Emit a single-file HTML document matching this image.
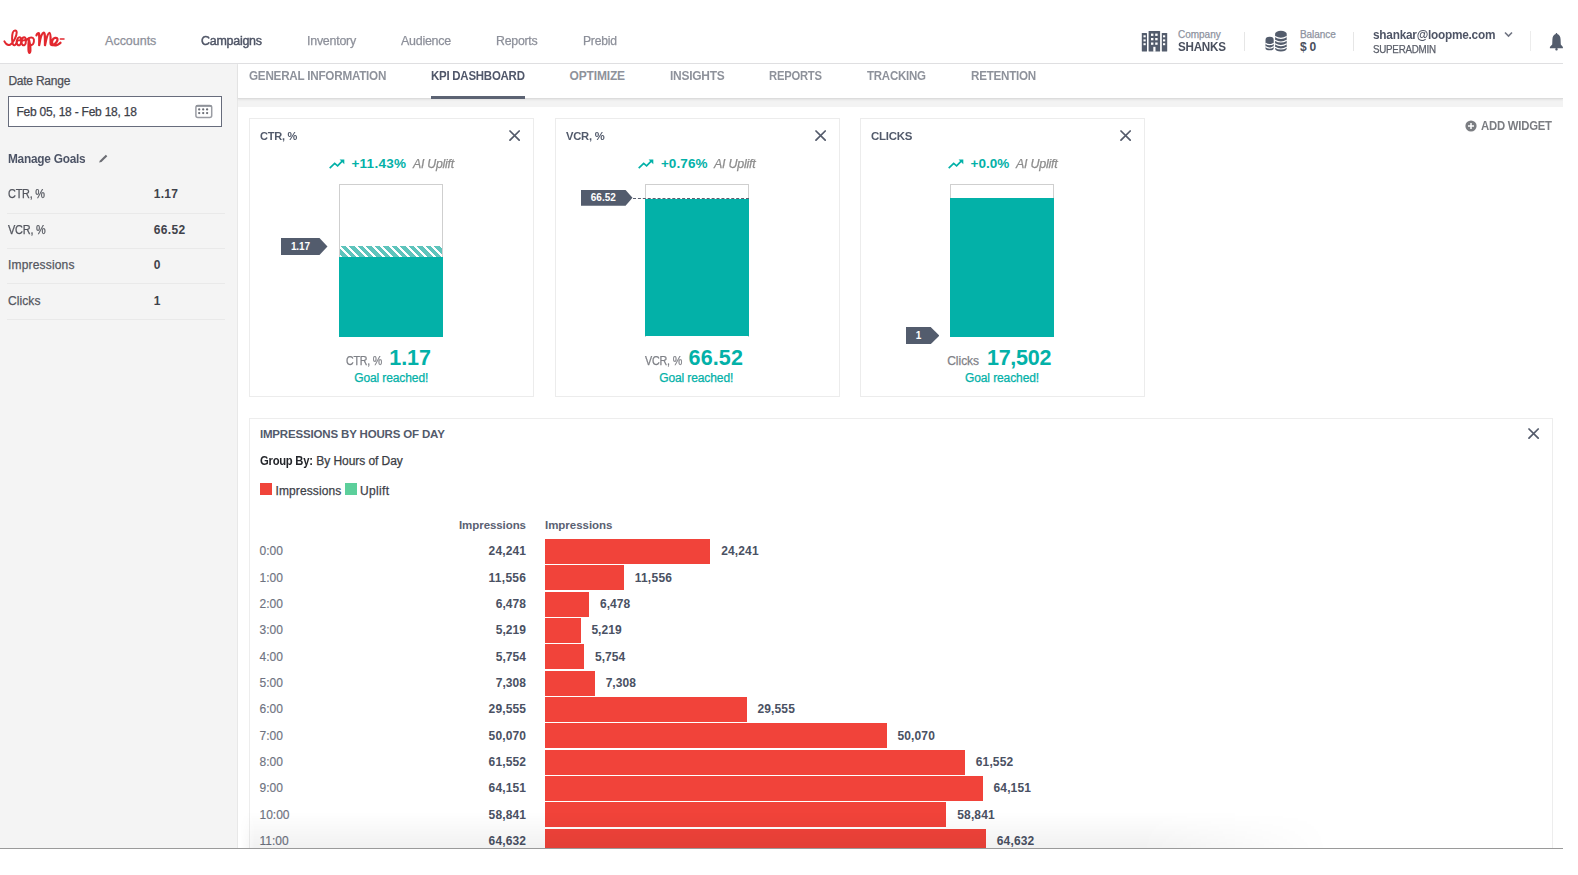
<!DOCTYPE html>
<html><head><meta charset="utf-8">
<style>
*{box-sizing:border-box;margin:0;padding:0}
html,body{width:1578px;height:875px;overflow:hidden;background:#fff;font-family:"Liberation Sans",sans-serif}
.a{position:absolute;white-space:nowrap;line-height:normal}
#app{position:absolute;left:0;top:0;width:1563px;height:848px;overflow:hidden;background:#fff}
.b{position:absolute}
</style></head><body>
<div id="app">
<div class="b" style="left:0;top:0;width:1563px;height:64px;background:#fff;border-bottom:1px solid #e0e0e2;box-shadow:0 0.5px 2px rgba(0,0,0,.07)"></div>
<div class="b" style="left:0;top:64px;width:238px;height:800px;background:#f4f4f4;border-right:1px solid #e8e8e8"></div>
<div class="b" style="left:238px;top:98px;width:1325px;height:9px;background:#f3f3f3"></div>
<div class="b" style="left:238px;top:64px;width:1325px;height:35px;background:#fff;border-bottom:1px solid #dcdcdc;box-shadow:0 0.5px 2px rgba(0,0,0,.07)"></div>
<svg class="b" style="left:0;top:26px" width="68" height="30" viewBox="0 0 68 30">
<g fill="none" stroke="#e2282f" stroke-width="2" stroke-linecap="round" stroke-linejoin="round">
<path d="M4.4 15.4 C6 18.5 8 19.5 10 18.8 C13 17.5 16.8 10 16.7 6.5 C16.6 4 14 3.5 12.8 6.5 C11.8 9.5 11.8 16 13 18.3 C14.2 20 15.8 19.5 16.5 16.5 C17 13 18.5 11.3 19.5 11.3 C21.6 11.3 21.7 17.5 20 18.8 C18.5 19.8 16.5 18.8 16.8 16.2 C17 14.2 19.5 13.8 21.3 14.6 C21.8 12.5 23.2 11.3 24.2 11.3 C26.3 11.3 26.4 17.5 24.8 18.8 C23.3 19.8 21.3 18.8 21.6 16.2 C21.8 14.2 24.3 13.8 26.3 14.6 C27.5 12 31 10.8 33 12 C34.8 13.5 34 18.5 31.5 19 C29.5 19.3 28.8 18 29 17"/>
<path d="M28.8 12.5 C28.5 17 28 22 28.6 25.5 C29 27.5 30.3 27.5 30.5 25 C30.8 22 30 17 29.2 14"/>
<path stroke-width="2.3" d="M36.5 9.3 C37 7.5 38.5 6.5 39 7.5 C39.5 10 39.3 15 39.2 19.2 C40 14 41.5 7 43.8 6.7 C45 6.6 45 12 45 19.2 C46 14 47.5 7 49.5 6.9 C50.8 7 50.6 12 50.6 17 C50.6 19 51.5 19.5 53 19 C55 18.3 58 15 57.5 13 C57 11.2 53.5 11.5 52.3 14.5 C51.3 17.5 53 19.8 56 19.3 C58 19 59.5 17.5 60.5 16.8"/>
<path stroke-width="1.5" d="M60.3 13 L64 13"/>
</g></svg>
<div class="a" style="font-size:12.5px;top:34.19px;color:#8d909a;-webkit-text-stroke:0.25px #8d909a;letter-spacing:-0.020px;left:105.10px;">Accounts</div>
<div class="a" style="font-size:12.5px;top:34.19px;color:#4f5566;transform:scaleX(0.9959);transform-origin:0 0;letter-spacing:-0.250px;left:200.90px;-webkit-text-stroke:0.45px #4f5566;">Campaigns</div>
<div class="a" style="font-size:12.5px;top:34.19px;color:#8d909a;-webkit-text-stroke:0.25px #8d909a;transform:scaleX(0.9952);transform-origin:0 0;letter-spacing:-0.250px;left:307.30px;">Inventory</div>
<div class="a" style="font-size:12.5px;top:34.19px;color:#8d909a;-webkit-text-stroke:0.25px #8d909a;transform:scaleX(0.9965);transform-origin:0 0;letter-spacing:-0.250px;left:401.30px;">Audience</div>
<div class="a" style="font-size:12.5px;top:34.19px;color:#8d909a;-webkit-text-stroke:0.25px #8d909a;transform:scaleX(0.9870);transform-origin:0 0;letter-spacing:-0.250px;left:496.30px;">Reports</div>
<div class="a" style="font-size:12.5px;top:34.19px;color:#8d909a;-webkit-text-stroke:0.25px #8d909a;transform:scaleX(0.9720);transform-origin:0 0;letter-spacing:-0.250px;left:583.20px;">Prebid</div>
<svg class="b" style="left:1141px;top:31px" width="27" height="21" viewBox="0 0 27 21">
<g fill="#535c6c">
<rect x="0.8" y="2" width="5.2" height="18.6" rx="0.6"/><rect x="20.8" y="2" width="5.4" height="18.6" rx="0.6"/>
<rect x="7.6" y="0" width="11.5" height="20.6" rx="0.6"/>
</g>
<g fill="#fff">
<rect x="2.5" y="4.3" width="2.2" height="2"/><rect x="2.5" y="8.4" width="2.2" height="2"/><rect x="2.5" y="12.2" width="2.2" height="2"/>
<rect x="22" y="4.3" width="2.2" height="2"/><rect x="22" y="8.4" width="2.2" height="2"/><rect x="22" y="12.2" width="2.2" height="2"/>
<rect x="10" y="2.6" width="2.4" height="2.3"/><rect x="14.2" y="2.6" width="2.4" height="2.3"/>
<rect x="10" y="7" width="2.4" height="2.3"/><rect x="14.2" y="7" width="2.4" height="2.3"/>
<rect x="10" y="11.5" width="2.4" height="2.3"/><rect x="14.2" y="11.5" width="2.4" height="2.3"/>
<rect x="12.3" y="15.8" width="2.2" height="5"/>
</g></svg>
<div class="a" style="font-size:10px;top:28.85px;color:#8e93a0;-webkit-text-stroke:0.25px #8e93a0;letter-spacing:-0.017px;left:1178.00px;">Company</div>
<div class="a" style="font-size:12px;top:39.84px;color:#4a505e;font-weight:bold;transform:scaleX(0.9707);transform-origin:0 0;letter-spacing:-0.250px;left:1178.00px;">SHANKS</div>
<div class="b" style="left:1244px;top:32px;width:1px;height:19px;background:#e6e6e6"></div>
<svg class="b" style="left:1265px;top:30px" width="23" height="23" viewBox="0 0 23 23">
<g fill="#535c6c">
<path d="M10.1 3.7 A5.8 2.9 0 0 1 21.7 3.7 V18.8 A5.8 2.6 0 0 1 10.1 18.8Z"/>
<path d="M0.5 9.9 A4.1 3.2 0 0 1 8.7 9.9 V18.2 A4.1 2.1 0 0 1 0.5 18.2Z"/>
</g>
<g fill="none" stroke="#fff" stroke-width="1.2">
<path d="M10 6.6 Q15.9 10.2 21.8 6.6"/><path d="M10 10.2 Q15.9 13.8 21.8 10.2"/><path d="M10 13.8 Q15.9 17.4 21.8 13.8"/><path d="M10 17.2 Q15.9 20.8 21.8 17.2"/>
<path d="M0.4 13.2 Q4.6 16.2 8.8 13.2"/><path d="M0.4 16.6 Q4.6 19.6 8.8 16.6"/>
</g></svg>
<div class="a" style="font-size:10px;top:28.85px;color:#8e93a0;-webkit-text-stroke:0.25px #8e93a0;letter-spacing:-0.075px;left:1300.00px;">Balance</div>
<div class="a" style="font-size:12px;top:39.84px;color:#4a505e;font-weight:bold;letter-spacing:-0.240px;left:1300.00px;">$ 0</div>
<div class="b" style="left:1353px;top:32px;width:1px;height:19px;background:#e6e6e6"></div>
<div class="a" style="font-size:12px;top:27.94px;color:#4f5566;font-weight:bold;transform:scaleX(0.9859);transform-origin:0 0;letter-spacing:-0.250px;left:1372.80px;">shankar@loopme.com</div>
<svg class="b" style="left:1504px;top:31px" width="9" height="7" viewBox="0 0 9 7"><path d="M1 1.5 L4.5 5 L8 1.5" fill="none" stroke="#707482" stroke-width="1.6"/></svg>
<div class="a" style="font-size:10px;top:44.15px;color:#5b5f6a;-webkit-text-stroke:0.25px #5b5f6a;transform:scaleX(0.9775);transform-origin:0 0;letter-spacing:-0.250px;left:1373.00px;">SUPERADMIN</div>
<div class="b" style="left:1530px;top:31px;width:1px;height:20px;background:#ececec"></div>
<svg class="b" style="left:1548px;top:32px" width="17" height="20" viewBox="0 0 17 20">
<g fill="#535c6c"><path d="M8.5 1 C9 1 9.3 1.5 9.3 2 C11.5 2.6 12.5 4.8 12.6 7.5 L12.8 12.5 L14.9 15 V16.3 H1.9 V15 L4.2 12.5 L4.4 7.5 C4.5 4.8 5.5 2.6 7.7 2 C7.7 1.5 8 1 8.5 1Z"/><rect x="7.3" y="16" width="2.4" height="2.6" rx="1"/></g></svg>
<div class="a" style="font-size:12px;top:69.34px;color:#8e929b;font-weight:bold;transform:scaleX(0.9741);transform-origin:0 0;letter-spacing:-0.250px;left:248.60px;">GENERAL INFORMATION</div>
<div class="a" style="font-size:12px;top:69.34px;color:#50576a;font-weight:bold;transform:scaleX(0.9549);transform-origin:0 0;letter-spacing:-0.250px;left:430.70px;">KPI DASHBOARD</div>
<div class="a" style="font-size:12px;top:69.34px;color:#8e929b;font-weight:bold;letter-spacing:-0.163px;left:569.60px;">OPTIMIZE</div>
<div class="a" style="font-size:12px;top:69.34px;color:#8e929b;font-weight:bold;transform:scaleX(0.9955);transform-origin:0 0;letter-spacing:-0.250px;left:669.80px;">INSIGHTS</div>
<div class="a" style="font-size:12px;top:69.34px;color:#8e929b;font-weight:bold;transform:scaleX(0.9377);transform-origin:0 0;letter-spacing:-0.250px;left:769.20px;">REPORTS</div>
<div class="a" style="font-size:12px;top:69.34px;color:#8e929b;font-weight:bold;transform:scaleX(0.9586);transform-origin:0 0;letter-spacing:-0.250px;left:867.20px;">TRACKING</div>
<div class="a" style="font-size:12px;top:69.34px;color:#8e929b;font-weight:bold;transform:scaleX(0.9694);transform-origin:0 0;letter-spacing:-0.250px;left:971.10px;">RETENTION</div>
<div class="b" style="left:431px;top:95.5px;width:94px;height:3px;background:#5c6373"></div>
<div class="a" style="font-size:12px;top:74.24px;color:#4d4f57;-webkit-text-stroke:0.25px #4d4f57;letter-spacing:-0.236px;left:8.40px;">Date Range</div>
<div class="b" style="left:8px;top:96px;width:214px;height:30.5px;background:#fff;border:1.5px solid #676c7c"></div>
<div class="a" style="font-size:12px;top:104.64px;color:#3e4149;-webkit-text-stroke:0.25px #3e4149;letter-spacing:-0.223px;left:16.40px;">Feb 05, 18 - Feb 18, 18</div>
<svg class="b" style="left:194px;top:104px" width="19" height="15" viewBox="0 0 19 15">
<rect x="1.9" y="1.6" width="15.8" height="12" rx="2" fill="none" stroke="#9a9ca3" stroke-width="1.5"/>
<rect x="2" y="1.2" width="15.6" height="1.6" fill="#8c8f97"/>
<g fill="#6a6d75"><circle cx="5.2" cy="5.4" r="1.15"/><circle cx="9.2" cy="5.4" r="1.15"/><circle cx="13.1" cy="5.4" r="1.15"/>
<circle cx="5.2" cy="9.1" r="1.15"/><circle cx="9.2" cy="9.1" r="1.15"/><circle cx="13.1" cy="9.1" r="1.15"/></g></svg>
<div class="a" style="font-size:12px;top:152.24px;color:#4d5466;font-weight:bold;transform:scaleX(0.9872);transform-origin:0 0;letter-spacing:-0.250px;left:8.40px;">Manage Goals</div>
<svg class="b" style="left:98px;top:153px" width="11" height="11" viewBox="0 0 11 11"><path d="M1 9.5 L2 7.5 L7.8 1.7 L9.3 3.2 L3.5 9 Z" fill="#6b6d73"/></svg>
<div class="a" style="font-size:12px;top:187.14px;color:#54575f;-webkit-text-stroke:0.25px #54575f;transform:scaleX(0.9080);transform-origin:0 0;letter-spacing:-0.250px;left:8.00px;">CTR, %</div>
<div class="a" style="font-size:12px;top:187.14px;color:#3f424a;font-weight:bold;letter-spacing:0.220px;left:153.80px;">1.17</div>
<div class="a" style="font-size:12px;top:223.44px;color:#54575f;-webkit-text-stroke:0.25px #54575f;transform:scaleX(0.9104);transform-origin:0 0;letter-spacing:-0.250px;left:8.00px;">VCR, %</div>
<div class="a" style="font-size:12px;top:223.44px;color:#3f424a;font-weight:bold;letter-spacing:0.310px;left:153.80px;">66.52</div>
<div class="a" style="font-size:12px;top:258.04px;color:#54575f;-webkit-text-stroke:0.25px #54575f;letter-spacing:0.172px;left:8.00px;">Impressions</div>
<div class="a" style="font-size:12px;top:258.04px;color:#3f424a;font-weight:bold;left:153.80px;">0</div>
<div class="a" style="font-size:12px;top:294.34px;color:#54575f;-webkit-text-stroke:0.25px #54575f;letter-spacing:0.084px;left:8.00px;">Clicks</div>
<div class="a" style="font-size:12px;top:294.34px;color:#3f424a;font-weight:bold;left:153.80px;">1</div>
<div class="b" style="left:7px;top:212.5px;width:218px;height:1px;background:#e9e9e9"></div>
<div class="b" style="left:7px;top:248px;width:218px;height:1px;background:#e9e9e9"></div>
<div class="b" style="left:7px;top:282.7px;width:218px;height:1px;background:#e9e9e9"></div>
<div class="b" style="left:7px;top:319.4px;width:218px;height:1px;background:#e9e9e9"></div>
<div class="b" style="left:249px;top:118px;width:284.5px;height:278.5px;border:1px solid #ececec;background:#fff"></div>
<div class="a" style="font-size:11.5px;top:129.59px;color:#525a6b;font-weight:bold;transform:scaleX(0.9590);transform-origin:0 0;letter-spacing:-0.250px;left:259.90px;">CTR, %</div>
<svg class="b" style="left:509.29999999999995px;top:129.8px" width="11.2" height="11.2" viewBox="0 0 11.2 11.2"><path d="M1 1 L10.2 10.2 M10.2 1 L1 10.2" stroke="#545b6b" stroke-width="1.75" stroke-linecap="round"/></svg>
<svg class="b" style="left:328.6px;top:159px" width="16" height="10" viewBox="0 0 16 10"><path d="M0.7 9.2 L5.7 4.4 L8.6 6.8 L13.2 2.2" fill="none" stroke="#03b1a8" stroke-width="1.7"/><path d="M10.6 0.6 H15.3 V5.3Z" fill="#03b1a8"/></svg>
<div class="a" style="font-size:13.5px;top:155.88px;color:#03b1a8;font-weight:bold;letter-spacing:0.280px;left:351.40px;">+11.43%</div>
<div class="a" style="font-size:12.5px;top:156.79px;color:#8c8c8c;font-style:italic;-webkit-text-stroke:0.25px #8c8c8c;transform:scaleX(0.9866);transform-origin:0 0;letter-spacing:-0.250px;left:412.82px;">AI Uplift</div>
<div class="b" style="left:339px;top:183.5px;width:104px;height:153px;border:1px solid #cfcfcf;border-bottom:none;background:#fff"></div>
<div class="b" style="left:339px;top:257px;width:104px;height:79.5px;background:#03b1a8"></div>
<div class="b" style="left:340px;top:246.3px;width:102px;height:10.699999999999989px;background:repeating-linear-gradient(45deg,#fff 0,#fff 1.9px,#5ec4bc 1.9px,#5ec4bc 6px)"></div>
<svg class="b" style="left:281.2px;top:237.7px" width="46.5" height="16.900000000000006" viewBox="0 0 46.5 16.900000000000006"><path d="M0 0 H38.5 L46.5 8.450000000000003 L38.5 16.900000000000006 H0Z" fill="#535c6d"/></svg>
<div class="a" style="font-size:10px;top:240.70px;color:#fff;font-weight:bold;letter-spacing:-0.150px;left:290.95px;">1.17</div>
<div class="a" style="font-size:12px;top:354.14px;color:#7f8187;-webkit-text-stroke:0.25px #7f8187;transform:scaleX(0.8883);transform-origin:0 0;letter-spacing:-0.250px;left:345.80px;">CTR, %</div>
<div class="a" style="font-size:21.5px;top:345.94px;color:#03b1a8;font-weight:bold;letter-spacing:-0.073px;left:389.30px;">1.17</div>
<div class="a" style="font-size:12px;top:371.34px;color:#03b1a8;-webkit-text-stroke:0.25px #03b1a8;letter-spacing:-0.105px;left:354.20px;">Goal reached!</div>
<div class="b" style="left:555px;top:118px;width:284.5px;height:278.5px;border:1px solid #ececec;background:#fff"></div>
<div class="a" style="font-size:11.5px;top:129.59px;color:#525a6b;font-weight:bold;transform:scaleX(0.9765);transform-origin:0 0;letter-spacing:-0.250px;left:565.90px;">VCR, %</div>
<svg class="b" style="left:815.3px;top:129.8px" width="11.2" height="11.2" viewBox="0 0 11.2 11.2"><path d="M1 1 L10.2 10.2 M10.2 1 L1 10.2" stroke="#545b6b" stroke-width="1.75" stroke-linecap="round"/></svg>
<svg class="b" style="left:638.1px;top:159px" width="16" height="10" viewBox="0 0 16 10"><path d="M0.7 9.2 L5.7 4.4 L8.6 6.8 L13.2 2.2" fill="none" stroke="#03b1a8" stroke-width="1.7"/><path d="M10.6 0.6 H15.3 V5.3Z" fill="#03b1a8"/></svg>
<div class="a" style="font-size:13.5px;top:155.88px;color:#03b1a8;font-weight:bold;letter-spacing:0.086px;left:660.90px;">+0.76%</div>
<div class="a" style="font-size:12.5px;top:156.79px;color:#8c8c8c;font-style:italic;-webkit-text-stroke:0.25px #8c8c8c;transform:scaleX(0.9959);transform-origin:0 0;letter-spacing:-0.250px;left:714.32px;">AI Uplift</div>
<div class="b" style="left:645px;top:183.5px;width:104px;height:153px;border:1px solid #cfcfcf;border-bottom:none;background:#fff"></div>
<div class="b" style="left:645px;top:199.4px;width:104px;height:137.1px;background:#03b1a8"></div>
<div class="b" style="left:632.5px;top:197.8px;width:116.5px;height:0;border-top:1.3px dashed #5a6070"></div>
<svg class="b" style="left:581px;top:190px" width="51.5" height="15.699999999999989" viewBox="0 0 51.5 15.699999999999989"><path d="M0 0 H44.60000000000002 L51.5 7.849999999999994 L44.60000000000002 15.699999999999989 H0Z" fill="#535c6d"/></svg>
<div class="a" style="font-size:10px;top:192.40px;color:#fff;font-weight:bold;letter-spacing:-0.013px;left:590.80px;">66.52</div>
<div class="a" style="font-size:12px;top:354.14px;color:#7f8187;-webkit-text-stroke:0.25px #7f8187;transform:scaleX(0.8983);transform-origin:0 0;letter-spacing:-0.250px;left:644.70px;">VCR, %</div>
<div class="a" style="font-size:21.5px;top:345.94px;color:#03b1a8;font-weight:bold;letter-spacing:0.111px;left:688.60px;">66.52</div>
<div class="a" style="font-size:12px;top:371.34px;color:#03b1a8;-webkit-text-stroke:0.25px #03b1a8;letter-spacing:-0.105px;left:659.20px;">Goal reached!</div>
<div class="b" style="left:860px;top:118px;width:284.5px;height:278.5px;border:1px solid #ececec;background:#fff"></div>
<div class="a" style="font-size:11.5px;top:129.59px;color:#525a6b;font-weight:bold;transform:scaleX(0.9969);transform-origin:0 0;letter-spacing:-0.250px;left:870.90px;">CLICKS</div>
<svg class="b" style="left:1120.3000000000002px;top:129.8px" width="11.2" height="11.2" viewBox="0 0 11.2 11.2"><path d="M1 1 L10.2 10.2 M10.2 1 L1 10.2" stroke="#545b6b" stroke-width="1.75" stroke-linecap="round"/></svg>
<svg class="b" style="left:948.1px;top:159px" width="16" height="10" viewBox="0 0 16 10"><path d="M0.7 9.2 L5.7 4.4 L8.6 6.8 L13.2 2.2" fill="none" stroke="#03b1a8" stroke-width="1.7"/><path d="M10.6 0.6 H15.3 V5.3Z" fill="#03b1a8"/></svg>
<div class="a" style="font-size:13.5px;top:155.88px;color:#03b1a8;font-weight:bold;letter-spacing:-0.019px;left:970.60px;">+0.0%</div>
<div class="a" style="font-size:12.5px;top:156.79px;color:#8c8c8c;font-style:italic;-webkit-text-stroke:0.25px #8c8c8c;transform:scaleX(0.9983);transform-origin:0 0;letter-spacing:-0.250px;left:1015.72px;">AI Uplift</div>
<div class="b" style="left:950px;top:183.5px;width:104px;height:153px;border:1px solid #cfcfcf;border-bottom:none;background:#fff"></div>
<div class="b" style="left:950px;top:198px;width:104px;height:138.5px;background:#03b1a8"></div>
<svg class="b" style="left:905.9px;top:326.7px" width="33.30000000000007" height="17.19999999999999" viewBox="0 0 33.30000000000007 17.19999999999999"><path d="M0 0 H24.700000000000045 L33.30000000000007 8.599999999999994 L24.700000000000045 17.19999999999999 H0Z" fill="#535c6d"/></svg>
<div class="a" style="font-size:10px;top:329.85px;color:#fff;font-weight:bold;left:915.75px;">1</div>
<div class="a" style="font-size:12px;top:354.14px;color:#7f8187;-webkit-text-stroke:0.25px #7f8187;letter-spacing:-0.016px;left:947.20px;">Clicks</div>
<div class="a" style="font-size:21.5px;top:345.94px;color:#03b1a8;font-weight:bold;letter-spacing:-0.218px;left:986.90px;">17,502</div>
<div class="a" style="font-size:12px;top:371.34px;color:#03b1a8;-webkit-text-stroke:0.25px #03b1a8;letter-spacing:-0.105px;left:965.00px;">Goal reached!</div>
<svg class="b" style="left:1465px;top:120px" width="12" height="12" viewBox="0 0 12 12"><circle cx="6" cy="6" r="5.6" fill="#7b7d82"/><path d="M6 3 V9 M3 6 H9" stroke="#fff" stroke-width="1.5"/></svg>
<div class="a" style="font-size:12px;top:119.24px;color:#7b7d82;font-weight:bold;transform:scaleX(0.9455);transform-origin:0 0;letter-spacing:-0.250px;left:1481.00px;">ADD WIDGET</div>
<div class="b" style="left:248.5px;top:418px;width:1304px;height:450px;border:1px solid #ededed;background:#fff"></div>
<div class="a" style="font-size:11.5px;top:427.89px;color:#525a6b;font-weight:bold;letter-spacing:-0.161px;left:259.90px;">IMPRESSIONS BY HOURS OF DAY</div>
<svg class="b" style="left:1528.4px;top:428.4px" width="11.2" height="11.2" viewBox="0 0 11.2 11.2"><path d="M1 1 L10.2 10.2 M10.2 1 L1 10.2" stroke="#545b6b" stroke-width="1.75" stroke-linecap="round"/></svg>
<div class="a" style="font-size:12px;top:453.84px;color:#23252a;font-weight:bold;transform:scaleX(0.9351);transform-origin:0 0;letter-spacing:-0.250px;left:259.90px;">Group By:</div>
<div class="a" style="font-size:12px;top:453.84px;color:#3a3d44;-webkit-text-stroke:0.25px #3a3d44;letter-spacing:-0.061px;left:316.30px;">By Hours of Day</div>
<div class="b" style="left:260px;top:483px;width:12px;height:12px;background:#f0443a"></div>
<div class="a" style="font-size:12px;top:484.14px;color:#3e4148;-webkit-text-stroke:0.25px #3e4148;letter-spacing:0.102px;left:275.50px;">Impressions</div>
<div class="b" style="left:344.5px;top:483px;width:12.5px;height:12px;background:#5ccf9b"></div>
<div class="a" style="font-size:12px;top:484.14px;color:#3e4148;-webkit-text-stroke:0.25px #3e4148;letter-spacing:0.328px;left:360.00px;">Uplift</div>
<div class="a" style="font-size:11.5px;top:518.59px;color:#5a6172;font-weight:bold;letter-spacing:-0.073px;left:459.00px;">Impressions</div>
<div class="a" style="font-size:11.5px;top:518.59px;color:#5a6172;font-weight:bold;letter-spacing:-0.033px;left:545.00px;">Impressions</div>
<div class="a" style="font-size:12px;top:544.34px;color:#6e7280;left:259.50px;-webkit-text-stroke:0.15px #6e7280;">0:00</div>
<div class="a" style="font-size:12px;top:544.34px;color:#4a5163;font-weight:bold;letter-spacing:0.136px;left:488.60px;">24,241</div>
<div class="b" style="left:545px;top:538.90px;width:165.40px;height:25.05px;background:#f1433a"></div>
<div class="a" style="font-size:12px;top:544.34px;color:#4a5163;font-weight:bold;letter-spacing:0.136px;left:721.20px;">24,241</div>
<div class="a" style="font-size:12px;top:570.69px;color:#6e7280;left:259.50px;-webkit-text-stroke:0.15px #6e7280;">1:00</div>
<div class="a" style="font-size:12px;top:570.69px;color:#4a5163;font-weight:bold;letter-spacing:0.268px;left:488.60px;">11,556</div>
<div class="b" style="left:545px;top:565.25px;width:78.85px;height:25.05px;background:#f1433a"></div>
<div class="a" style="font-size:12px;top:570.69px;color:#4a5163;font-weight:bold;letter-spacing:0.268px;left:634.65px;">11,556</div>
<div class="a" style="font-size:12px;top:597.04px;color:#6e7280;left:259.50px;-webkit-text-stroke:0.15px #6e7280;">2:00</div>
<div class="a" style="font-size:12px;top:597.04px;color:#4a5163;font-weight:bold;letter-spacing:0.035px;left:495.80px;">6,478</div>
<div class="b" style="left:545px;top:591.60px;width:44.20px;height:25.05px;background:#f1433a"></div>
<div class="a" style="font-size:12px;top:597.04px;color:#4a5163;font-weight:bold;letter-spacing:0.035px;left:600.00px;">6,478</div>
<div class="a" style="font-size:12px;top:623.39px;color:#6e7280;left:259.50px;-webkit-text-stroke:0.15px #6e7280;">3:00</div>
<div class="a" style="font-size:12px;top:623.39px;color:#4a5163;font-weight:bold;letter-spacing:0.035px;left:495.80px;">5,219</div>
<div class="b" style="left:545px;top:617.95px;width:35.61px;height:25.05px;background:#f1433a"></div>
<div class="a" style="font-size:12px;top:623.39px;color:#4a5163;font-weight:bold;letter-spacing:0.035px;left:591.41px;">5,219</div>
<div class="a" style="font-size:12px;top:649.74px;color:#6e7280;left:259.50px;-webkit-text-stroke:0.15px #6e7280;">4:00</div>
<div class="a" style="font-size:12px;top:649.74px;color:#4a5163;font-weight:bold;letter-spacing:0.035px;left:495.80px;">5,754</div>
<div class="b" style="left:545px;top:644.30px;width:39.26px;height:25.05px;background:#f1433a"></div>
<div class="a" style="font-size:12px;top:649.74px;color:#4a5163;font-weight:bold;letter-spacing:0.035px;left:595.06px;">5,754</div>
<div class="a" style="font-size:12px;top:676.09px;color:#6e7280;left:259.50px;-webkit-text-stroke:0.15px #6e7280;">5:00</div>
<div class="a" style="font-size:12px;top:676.09px;color:#4a5163;font-weight:bold;letter-spacing:0.035px;left:495.80px;">7,308</div>
<div class="b" style="left:545px;top:670.65px;width:49.86px;height:25.05px;background:#f1433a"></div>
<div class="a" style="font-size:12px;top:676.09px;color:#4a5163;font-weight:bold;letter-spacing:0.035px;left:605.66px;">7,308</div>
<div class="a" style="font-size:12px;top:702.44px;color:#6e7280;left:259.50px;-webkit-text-stroke:0.15px #6e7280;">6:00</div>
<div class="a" style="font-size:12px;top:702.44px;color:#4a5163;font-weight:bold;letter-spacing:0.136px;left:488.60px;">29,555</div>
<div class="b" style="left:545px;top:697.00px;width:201.66px;height:25.05px;background:#f1433a"></div>
<div class="a" style="font-size:12px;top:702.44px;color:#4a5163;font-weight:bold;letter-spacing:0.136px;left:757.46px;">29,555</div>
<div class="a" style="font-size:12px;top:728.79px;color:#6e7280;left:259.50px;-webkit-text-stroke:0.15px #6e7280;">7:00</div>
<div class="a" style="font-size:12px;top:728.79px;color:#4a5163;font-weight:bold;letter-spacing:0.136px;left:488.60px;">50,070</div>
<div class="b" style="left:545px;top:723.35px;width:341.64px;height:25.05px;background:#f1433a"></div>
<div class="a" style="font-size:12px;top:728.79px;color:#4a5163;font-weight:bold;letter-spacing:0.136px;left:897.44px;">50,070</div>
<div class="a" style="font-size:12px;top:755.14px;color:#6e7280;left:259.50px;-webkit-text-stroke:0.15px #6e7280;">8:00</div>
<div class="a" style="font-size:12px;top:755.14px;color:#4a5163;font-weight:bold;letter-spacing:0.136px;left:488.60px;">61,552</div>
<div class="b" style="left:545px;top:749.70px;width:419.98px;height:25.05px;background:#f1433a"></div>
<div class="a" style="font-size:12px;top:755.14px;color:#4a5163;font-weight:bold;letter-spacing:0.136px;left:975.78px;">61,552</div>
<div class="a" style="font-size:12px;top:781.49px;color:#6e7280;left:259.50px;-webkit-text-stroke:0.15px #6e7280;">9:00</div>
<div class="a" style="font-size:12px;top:781.49px;color:#4a5163;font-weight:bold;letter-spacing:0.136px;left:488.60px;">64,151</div>
<div class="b" style="left:545px;top:776.05px;width:437.72px;height:25.05px;background:#f1433a"></div>
<div class="a" style="font-size:12px;top:781.49px;color:#4a5163;font-weight:bold;letter-spacing:0.136px;left:993.52px;">64,151</div>
<div class="a" style="font-size:12px;top:807.84px;color:#6e7280;left:259.50px;-webkit-text-stroke:0.15px #6e7280;">10:00</div>
<div class="a" style="font-size:12px;top:807.84px;color:#4a5163;font-weight:bold;letter-spacing:0.136px;left:488.60px;">58,841</div>
<div class="b" style="left:545px;top:802.40px;width:401.49px;height:25.05px;background:#f1433a"></div>
<div class="a" style="font-size:12px;top:807.84px;color:#4a5163;font-weight:bold;letter-spacing:0.136px;left:957.29px;">58,841</div>
<div class="a" style="font-size:12px;top:834.19px;color:#6e7280;left:259.50px;-webkit-text-stroke:0.15px #6e7280;">11:00</div>
<div class="a" style="font-size:12px;top:834.19px;color:#4a5163;font-weight:bold;letter-spacing:0.136px;left:488.60px;">64,632</div>
<div class="b" style="left:545px;top:828.75px;width:441.00px;height:25.05px;background:#f1433a"></div>
<div class="a" style="font-size:12px;top:834.19px;color:#4a5163;font-weight:bold;letter-spacing:0.136px;left:996.80px;">64,632</div>
<div class="b" style="left:240px;top:812px;width:1100px;height:36px;background:linear-gradient(to bottom,rgba(0,0,0,0),rgba(0,0,0,.055));-webkit-mask-image:linear-gradient(to right,transparent 0,#000 15px,#000 900px,transparent 1090px)"></div>
</div>
<div class="b" style="left:0;top:847.6px;width:1563px;height:1.2px;background:#9a9a9a"></div>
</body></html>
